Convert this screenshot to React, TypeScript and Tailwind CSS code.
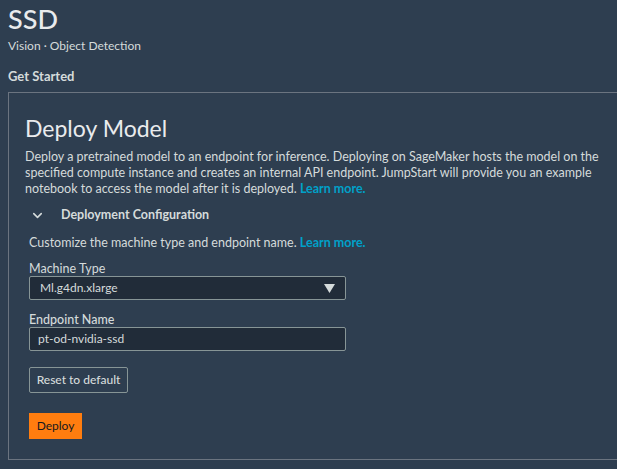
import { ChevronDown } from 'lucide-react'

export default function App() {
  return (
    <div className="w-[617px] h-[469px] overflow-hidden bg-[#2e3e50] text-[#d5dbdb] font-['Lato',sans-serif]">
      <div className="pl-2 pt-[3px]">
        <h1 className="text-[27px] leading-[32px] font-medium text-[#e9ebed]">SSD</h1>
        <p className="text-[12px] leading-4 mt-[3px]">Vision · Object Detection</p>
        <p className="text-[13px] leading-4 font-bold mt-[14px]">Get Started</p>
      </div>

      <section className="ml-2 mt-[8px] w-[640px] h-[368px] border border-[#6b7480] pl-4 pt-[21px]">
        <h2 className="text-[23px] leading-7 text-[#e9ebed]">Deploy Model</h2>
        <p className="text-[12.5px] leading-4 mt-[7px] w-[590px]">
          Deploy a pretrained model to an endpoint for inference. Deploying on SageMaker hosts the model on the
          specified compute instance and creates an internal API endpoint. JumpStart will provide you an example
          notebook to access the model after it is deployed.{' '}
          <a className="text-[#00a1c9] font-bold">Learn more.</a>
        </p>

        <div className="flex items-center mt-[8px] h-5">
          <ChevronDown size={15} strokeWidth={2.5} className="ml-[5px] text-[#d5dbdb]" />
          <span className="ml-[16px] text-[12.5px] font-bold">Deployment Configuration</span>
        </div>

        <div className="pl-1">
          <p className="text-[12.5px] leading-4 mt-[10px]">
            Customize the machine type and endpoint name.{' '}
            <a className="text-[#00a1c9] font-bold">Learn more.</a>
          </p>

          <label className="block text-[12.5px] leading-[15px] mt-[10px]">Machine Type</label>
          <div className="mt-0 w-[317px] h-[24px] rounded-[2px] border border-[#879596] bg-[#212c39] flex items-center justify-between px-[10px]">
            <span className="text-[12px]">Ml.g4dn.xlarge</span>
            <svg width="11" height="9" viewBox="0 0 11 9"><path d="M0 0h11L5.5 9z" fill="#d5dbdb" /></svg>
          </div>

          <label className="block text-[12.5px] leading-[15px] font-medium mt-[12px]">Endpoint Name</label>
          <div className="mt-0 w-[317px] h-[24px] rounded-[2px] border border-[#879596] bg-[#212c39] flex items-center px-[8px]">
            <span className="text-[12px]">pt-od-nvidia-ssd</span>
          </div>

          <button className="mt-[16px] h-[26px] w-[99px] rounded-[2px] border border-[#879596] text-[12px] font-medium text-[#d5dbdb]">
            Reset to default
          </button>

          <div>
            <button className="mt-[20px] h-[26px] w-[53px] bg-[#ff7d0f] text-[12px] text-[#16191f]">Deploy</button>
          </div>
        </div>
      </section>
    </div>
  )
}
